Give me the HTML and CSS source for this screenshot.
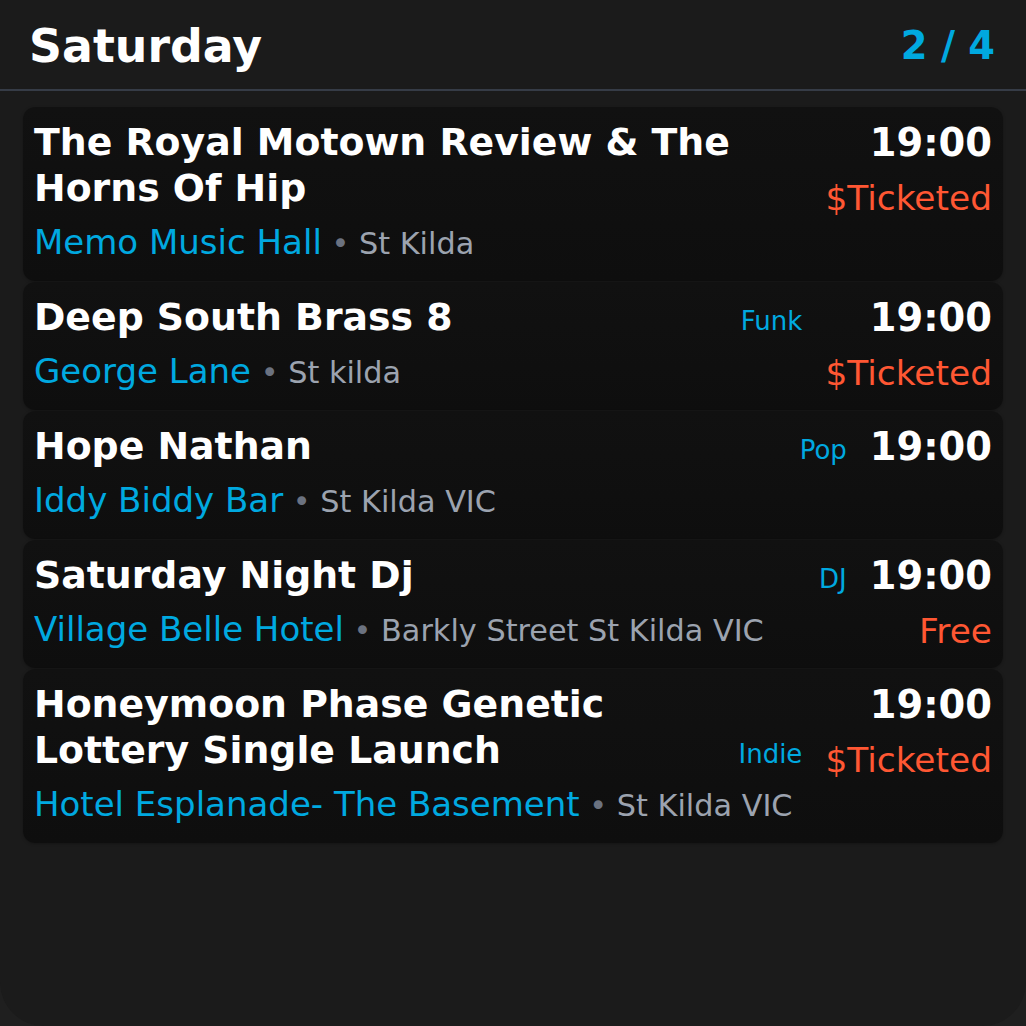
FILE: index.html
```html
<!DOCTYPE html>
<html lang="en">
<head>
<meta charset="utf-8">
<title>Saturday</title>
<link rel="stylesheet" href="styles.css">
</head>
<body>
<div class="screen">
  <header class="head">
    <h1 class="day">Saturday</h1>
    <div class="pager">2 / 4</div>
  </header>
  <main class="list">
    <article class="card">
      <div class="main">
        <div class="title-row">
          <h2 class="title">The Royal Motown Review &amp; The Horns Of Hip</h2>
        </div>
        <div class="where"><span class="venue">Memo Music Hall</span><span class="loc"> <span class="dot">•</span> St Kilda</span></div>
      </div>
      <div class="side">
        <div class="time">19:00</div>
        <div class="price">$Ticketed</div>
      </div>
    </article>
    <article class="card">
      <div class="main">
        <div class="title-row">
          <h2 class="title">Deep South Brass 8</h2>
          <span class="genre">Funk</span>
        </div>
        <div class="where"><span class="venue">George Lane</span><span class="loc"> <span class="dot">•</span> St kilda</span></div>
      </div>
      <div class="side">
        <div class="time">19:00</div>
        <div class="price">$Ticketed</div>
      </div>
    </article>
    <article class="card">
      <div class="main">
        <div class="title-row">
          <h2 class="title">Hope Nathan</h2>
          <span class="genre">Pop</span>
        </div>
        <div class="where"><span class="venue">Iddy Biddy Bar</span><span class="loc"> <span class="dot">•</span> St Kilda VIC</span></div>
      </div>
      <div class="side">
        <div class="time">19:00</div>
      </div>
    </article>
    <article class="card">
      <div class="main">
        <div class="title-row">
          <h2 class="title">Saturday Night Dj</h2>
          <span class="genre">DJ</span>
        </div>
        <div class="where"><span class="venue">Village Belle Hotel</span><span class="loc"> <span class="dot">•</span> Barkly Street St Kilda VIC</span></div>
      </div>
      <div class="side">
        <div class="time">19:00</div>
        <div class="price">Free</div>
      </div>
    </article>
    <article class="card">
      <div class="main">
        <div class="title-row">
          <h2 class="title">Honeymoon Phase Genetic Lottery Single Launch</h2>
          <span class="genre">Indie</span>
        </div>
        <div class="where"><span class="venue">Hotel Esplanade- The Basement</span><span class="loc"> <span class="dot">•</span> St Kilda VIC</span></div>
      </div>
      <div class="side">
        <div class="time">19:00</div>
        <div class="price">$Ticketed</div>
      </div>
    </article>
  </main>
</div>
</body>
</html>
```
FILE: styles.css
```css
* { box-sizing: border-box; }
html, body {
  margin: 0;
  padding: 0;
  background: #1f1f1f;
}
body {
  font-family: "DejaVu Sans", "Liberation Sans", sans-serif;
  color: #ffffff;
}
.screen {
  width: 1026px;
  height: 1026px;
  background: #1b1b1b;
  border-radius: 0 0 44px 44px;
  overflow: hidden;
}
.head {
  height: 91px;
  padding: 4px 31px 0 29px;
  display: flex;
  align-items: center;
  justify-content: space-between;
  border-bottom: 2px solid #363c47;
}
.day {
  margin: 0;
  font-size: 45.8px;
  line-height: 1.2;
  font-weight: 700;
  color: #ffffff;
}
.pager {
  font-size: 38.4px;
  line-height: 1.2;
  font-weight: 700;
  color: #00a9e0;
}
.list {
  padding: 16px 23px;
  display: flex;
  flex-direction: column;
  gap: 1px;
}
.card {
  display: flex;
  align-items: flex-start;
  gap: 23px;
  padding: 12px 11px 14px 11px;
  border-radius: 12px;
  background: linear-gradient(#111111, #0e0e0e);
  box-shadow: 0 1px 3px rgba(0,0,0,0.25);
}
.main {
  flex: 1;
  min-width: 0;
  display: flex;
  flex-direction: column;
}
.title-row {
  display: flex;
  align-items: flex-end;
  gap: 24px;
}
.title {
  flex: 1;
  margin: 0;
  font-size: 37.8px;
  line-height: 46px;
  font-weight: 700;
  color: #ffffff;
}
.genre {
  margin-bottom: 3px;
  font-size: 26px;
  line-height: 1.2;
  color: #00a9e0;
  white-space: nowrap;
}
.where {
  margin-top: 6px;
  height: 50px;
  font-size: 34px;
  line-height: 50px;
  white-space: nowrap;
}
.venue {
  line-height: 1;
  color: #00a9e0;
}
.loc {
  font-size: 30.3px;
  line-height: 1;
  color: #9ca3af;
}
.dot {
  color: #6b7280;
}
.side {
  display: flex;
  flex-direction: column;
  align-items: flex-end;
  text-align: right;
}
.time {
  font-size: 38.4px;
  line-height: 48px;
  font-weight: 700;
  color: #ffffff;
}
.price {
  margin-top: 8px;
  font-size: 34.4px;
  line-height: 46px;
  color: #ff5733;
}
```
